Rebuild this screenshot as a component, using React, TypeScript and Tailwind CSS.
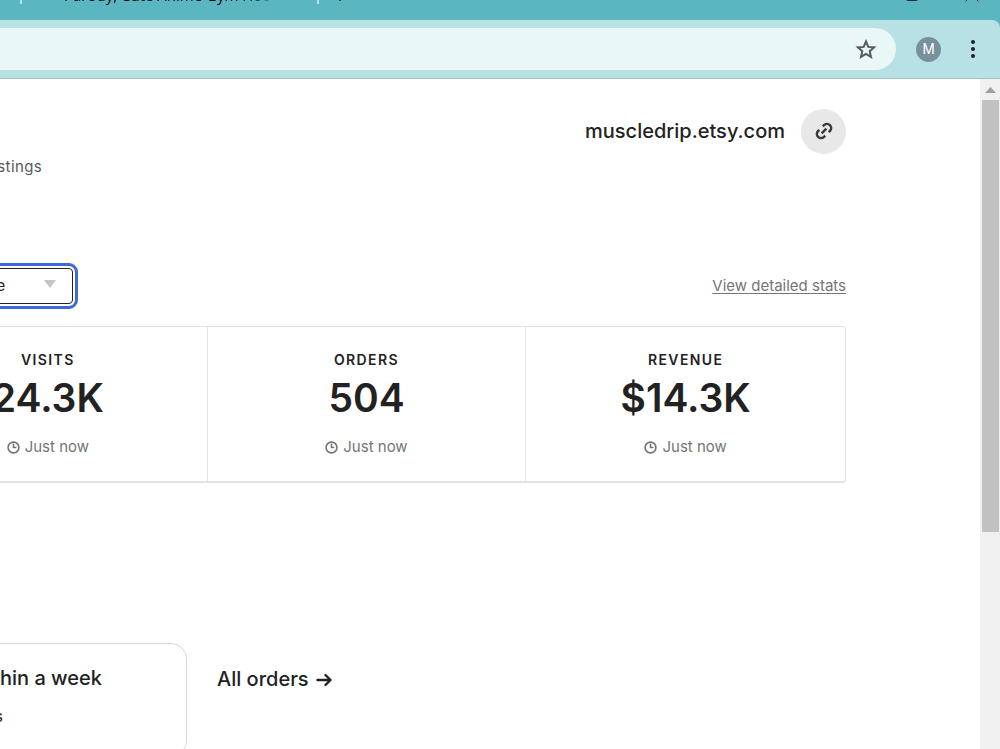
import { useState } from "react";
import { Clock3, Link2, Plus, Square, X } from "lucide-react";

interface Stat {
  label: string;
  value: string;
  updated: string;
}

const stats: Stat[] = [
  { label: "VISITS", value: "24.3K", updated: "Just now" },
  { label: "ORDERS", value: "504", updated: "Just now" },
  { label: "REVENUE", value: "$14.3K", updated: "Just now" },
];

function TabStrip() {
  return (
    <div className="flex h-[42px] items-center bg-[#5ab7c1] pb-2 text-black">
      <div className="ml-5 h-[18px] w-[2px] bg-[#b8e1e5]" />
      <div className="ml-[42px] w-[212px] overflow-hidden whitespace-nowrap mask-r-from-85% font-['Open_Sans',sans-serif] text-[15px] leading-5">
        Parody, Cute Anime Gym Hoodie
      </div>
      <div className="ml-[41px] h-[18px] w-[2px] bg-[#b8e1e5]" />
      <button aria-label="New tab" className="ml-3">
        <Plus size={18} />
      </button>
      <div className="ml-auto flex items-center gap-[41px] pr-[16px]">
        <button aria-label="Maximize">
          <Square size={14} strokeLinejoin="miter" />
        </button>
        <button aria-label="Close">
          <X size={24} strokeWidth={1} />
        </button>
      </div>
    </div>
  );
}

function Toolbar() {
  return (
    <div className="bg-[#5ab7c1]">
      <div className="flex h-[59px] items-center rounded-tr-lg border-b border-[#9fc0c4] bg-[#b8e1e5]">
        <div className="flex h-[42px] flex-1 items-center justify-end rounded-r-full bg-[#eaf7f7] pr-[18px]">
          <button aria-label="Bookmark this page" className="text-[#5a5a5c]">
            <svg width="24" height="24" viewBox="0 0 24 24" fill="none" stroke="currentColor" strokeWidth="2">
              <path d="M12 4.5l2.3 5.4 5.8.5-4.4 3.8 1.3 5.7-5-3-5 3 1.3-5.7-4.4-3.8 5.8-.5z" />
            </svg>
          </button>
        </div>
        <button className="ml-5 h-[25px] w-[25px] rounded-full bg-[#78909c] font-[Roboto,sans-serif] text-sm leading-6 text-white">
          M
        </button>
        <button aria-label="Menu" className="mr-[19px] ml-[24px]">
          <svg width="16" height="20" viewBox="0 0 16 20" fill="#202124">
            <circle cx="8" cy="3" r="2" />
            <circle cx="8" cy="10" r="2" />
            <circle cx="8" cy="17" r="2" />
          </svg>
        </button>
      </div>
    </div>
  );
}

function StatCell({ stat }: { stat: Stat }) {
  return (
    <div className="flex flex-col items-center pt-[23px] pb-[22px]">
      <h3 className="text-sm font-semibold tracking-widest">{stat.label}</h3>
      <p className="mt-1 text-[39px] leading-12 font-semibold">{stat.value}</p>
      <p className="mt-[13px] flex items-center gap-[5px] text-[15px] leading-6 text-[#757575]">
        <Clock3 size={13} strokeWidth={3} />
        {stat.updated}
      </p>
    </div>
  );
}

function Scrollbar() {
  return (
    <div className="w-5 shrink-0 bg-[#f0f0f0]">
      <div className="flex h-[21px] items-center justify-center">
        <svg width="11" height="6" viewBox="0 0 11 6" fill="#a0a0a0">
          <path d="M5.5 0 11 6H0z" />
        </svg>
      </div>
      <div className="mr-px ml-[2px] h-[432px] bg-[#c1c1c1]" />
    </div>
  );
}

export default function App() {
  const [range, setRange] = useState("all");

  return (
    <div className="h-screen overflow-hidden bg-white">
      <div className="-mt-[22px] flex min-h-[calc(100vh+22px)] flex-col font-[Inter,sans-serif] text-[#222222]">
        <TabStrip />
        <Toolbar />
        <div className="flex flex-1">
          <main className="mr-[134px] -ml-[112px] flex-1 pt-[30px]">
            {/* Shop header */}
            <header className="flex items-start justify-between">
              <p className="w-[154px] pt-[46px] text-right text-[15px] leading-6 tracking-wide text-[#595959]">
                Active listings
              </p>
              <div className="flex items-center gap-4">
                <span className="pb-[2px] text-xl font-medium">muscledrip.etsy.com</span>
                <button
                  aria-label="Copy shop link"
                  className="flex h-[45px] w-[45px] items-center justify-center rounded-full bg-[#e8e8e8] pb-[2px] text-[#3a3a3a]"
                >
                  <Link2 size={20} strokeWidth={3} strokeLinecap="butt" className="-rotate-45" />
                </button>
              </div>
            </header>

            {/* Date range */}
            <div className="mt-[89px] flex items-center justify-between">
              <div className="flex w-[185px] justify-end">
                <div className="relative">
                  <select
                    aria-label="Date range"
                    value={range}
                    onChange={(e) => setRange(e.target.value)}
                    className="h-9 w-[137px] appearance-none rounded border border-[#222222] bg-white pl-4 text-[15px] outline-3 outline-offset-2 outline-[#3f68dc]"
                  >
                    <option value="all">All time</option>
                    <option value="today">Today</option>
                    <option value="week">Last 7 days</option>
                  </select>
                  <svg
                    className="pointer-events-none absolute top-3 right-[17px]"
                    width="12"
                    height="8"
                    viewBox="0 0 12 8"
                    fill="#c4c4c2"
                  >
                    <path d="M0 0h12L6 8z" />
                  </svg>
                </div>
              </div>
              <a href="#" className="text-[15px] text-[#757575] underline underline-offset-2">
                View detailed stats
              </a>
            </div>

            {/* Stats */}
            <section className="mt-[22px] grid grid-cols-3 divide-x divide-[#e4e4e4] rounded border border-b-2 border-[#e1e3df]">
              {stats.map((stat) => (
                <StatCell key={stat.label} stat={stat} />
              ))}
            </section>

            {/* Orders */}
            <section className="mt-[160px] flex items-start gap-[30px]">
              <div className="h-[114px] w-[299px] rounded-2xl border border-[#d8d8d8] pt-5">
                <h2 className="w-[213px] text-right text-xl font-medium">Ship within a week</h2>
                <p className="mt-3 w-[114px] text-right text-base">0 orders</p>
              </div>
              <a href="#" className="flex items-center gap-[7px] pt-[22px] text-xl font-medium">
                All orders
                <svg
                  width="17"
                  height="16"
                  viewBox="0 0 17 16"
                  fill="none"
                  stroke="currentColor"
                  strokeWidth="2.4"
                  strokeLinecap="round"
                  strokeLinejoin="round"
                >
                  <path d="M1.5 9h13M9.5 4l5 5-5 5" />
                </svg>
              </a>
            </section>
          </main>
          <Scrollbar />
        </div>
      </div>
    </div>
  );
}
